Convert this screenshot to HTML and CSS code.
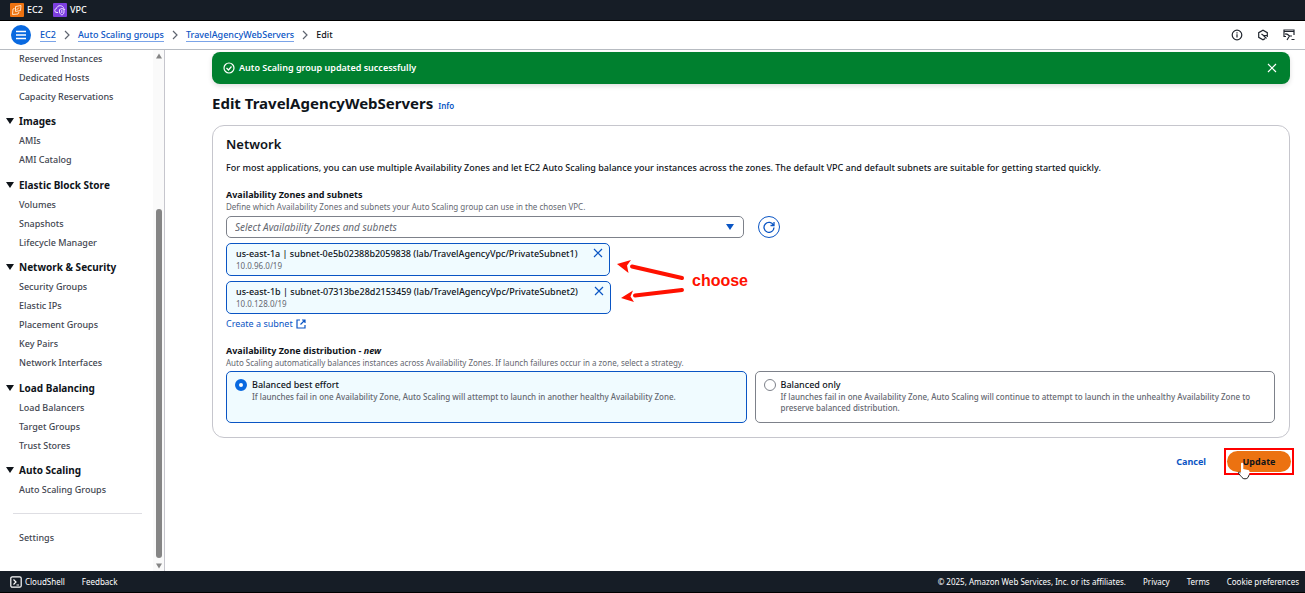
FILE: index.html
```html
<!DOCTYPE html>
<html lang="en">
<head>
<meta charset="utf-8">
<title>Edit TravelAgencyWebServers | EC2</title>
<link rel="stylesheet" href="styles.css">
</head>
<body>
<div class="app">
  <header class="favorites">
    <a class="favorite" href="#">
      <svg class="service-icon" viewBox="0 0 14 14" aria-hidden="true"><rect width="14" height="14" rx="1" fill="#ed7211"/><g fill="none" stroke="#ffe3c4" stroke-width="1" stroke-linejoin="round"><path d="M5.500 3.500 11 2.500 10.500 7.500 5.500 8.500z"/><path d="M4.500 5.500 3 6 2.500 11.500 8 11 9 9M6.500 7 9 4.500"/></g></svg>
      EC2</a>
    <a class="favorite" href="#">
      <svg class="service-icon" viewBox="0 0 14 14" aria-hidden="true"><rect width="14" height="14" rx="1" fill="#7d3fe0"/><g fill="none" stroke="#eadcff" stroke-width="1"><path d="M5 9.500H4a2 2 0 0 1-.5-4C4 3.500 5.500 2.500 7.500 2.700 9.500 3 10.500 4 10.800 5.500L12 7"/><path d="M6.500 6.500 9 5.500l2 1v2.500c0 1.500-1 2.500-2 3-1-.5-2.500-1.500-2.500-3zM8.800 7v3"/></g></svg>
      VPC</a>
  </header>

  <div class="navbar">
    <button class="menu-button" aria-label="Toggle navigation"><svg viewBox="0 0 20 20"><path d="M5 6.500h10M5 10h10M5 13.500h10" stroke="#fff" stroke-width="1.500"/></svg></button>
    <nav class="breadcrumbs" aria-label="Breadcrumbs">
      <a href="#">EC2</a>
      <svg class="chevron" viewBox="0 0 6 10"><path d="m1 1 4 4-4 4"/></svg>
      <a href="#">Auto Scaling groups</a>
      <svg class="chevron" viewBox="0 0 6 10"><path d="m1 1 4 4-4 4"/></svg>
      <a href="#">TravelAgencyWebServers</a>
      <svg class="chevron" viewBox="0 0 6 10"><path d="m1 1 4 4-4 4"/></svg>
      <span>Edit</span>
    </nav>
    <div class="tools">
      <button class="icon-button" aria-label="Info"><svg viewBox="0 0 12 12"><circle cx="6" cy="6" r="4.800"/><path d="M6 5.300v3.200M6 3.300v1.200"/></svg></button>
      <button class="icon-button" aria-label="Diagnose"><svg viewBox="0 0 12 12"><path d="M10.300 8V3.700L6 1.300 1.700 3.700v4.600L6 10.700l2-1.100M4.500 5l2 1.500h3.800M6.500 6.500l3 3"/></svg></button>
      <button class="icon-button" aria-label="CloudShell"><svg viewBox="0 0 12 12"><path d="M3 7.500H1V1h10v5M1 2.500h10M4 5l2.500 2L4 11M6.500 7H9M8.500 10.500h3M3 4v2"/></svg></button>
    </div>
  </div>

  <div class="workspace">
    <aside class="sidebar">
      <nav class="side-nav" aria-label="EC2">
        <ul class="links">
          <li><a href="#">Reserved Instances</a></li>
          <li><a href="#">Dedicated Hosts</a></li>
          <li><a href="#">Capacity Reservations</a></li>
        </ul>
        <section class="group">
          <h2>Images</h2>
          <ul class="links">
            <li><a href="#">AMIs</a></li>
            <li><a href="#">AMI Catalog</a></li>
          </ul>
        </section>
        <section class="group">
          <h2>Elastic Block Store</h2>
          <ul class="links">
            <li><a href="#">Volumes</a></li>
            <li><a href="#">Snapshots</a></li>
            <li><a href="#">Lifecycle Manager</a></li>
          </ul>
        </section>
        <section class="group">
          <h2>Network &amp; Security</h2>
          <ul class="links">
            <li><a href="#">Security Groups</a></li>
            <li><a href="#">Elastic IPs</a></li>
            <li><a href="#">Placement Groups</a></li>
            <li><a href="#">Key Pairs</a></li>
            <li><a href="#">Network Interfaces</a></li>
          </ul>
        </section>
        <section class="group">
          <h2>Load Balancing</h2>
          <ul class="links">
            <li><a href="#">Load Balancers</a></li>
            <li><a href="#">Target Groups</a></li>
            <li><a href="#">Trust Stores</a></li>
          </ul>
        </section>
        <section class="group">
          <h2>Auto Scaling</h2>
          <ul class="links">
            <li><a href="#">Auto Scaling Groups</a></li>
          </ul>
        </section>
        <hr class="divider">
        <ul class="links">
          <li><a href="#">Settings</a></li>
        </ul>
      </nav>
      <div class="scrollbar" aria-hidden="true">
        <svg viewBox="0 0 8 6"><path d="M1 5.500 4 .5l3 5z"/></svg>
        <div class="track"><div class="thumb"></div></div>
        <svg viewBox="0 0 8 6"><path d="M1 .5 4 5.500l3-5z"/></svg>
      </div>
    </aside>

    <main class="content">
      <div class="flash" role="status">
        <svg class="flash-icon" viewBox="0 0 12 12"><circle cx="6" cy="6" r="5"/><path d="m3.500 6 2 2 3-3.500"/></svg>
        <span>Auto Scaling group updated successfully</span>
        <button class="flash-close" aria-label="Dismiss"><svg viewBox="0 0 10 10"><path d="m1 1 8 8M9 1 1 9"/></svg></button>
      </div>

      <div class="page-title">
        <h1>Edit TravelAgencyWebServers</h1>
        <a href="#">Info</a>
      </div>

      <form class="edit-form">
        <section class="card">
          <h2 class="card-title">Network</h2>
          <p class="lead">For most applications, you can use multiple Availability Zones and let EC2 Auto Scaling balance your instances across the zones. The default VPC and default subnets are suitable for getting started quickly.</p>

          <div class="field">
            <label class="label" for="subnets">Availability Zones and subnets</label>
            <p class="hint">Define which Availability Zones and subnets your Auto Scaling group can use in the chosen VPC.</p>
            <div class="select-row">
              <div class="select-wrap">
                <select id="subnets" class="select"><option>Select Availability Zones and subnets</option></select>
                <svg class="caret" viewBox="0 0 8 6"><path d="M0 0h8L4 6z"/></svg>
              </div>
              <button type="button" class="refresh" aria-label="Refresh"><svg viewBox="0 0 12 12"><path d="M10.500 4.200A5 5 0 1 0 11 6.500M11 1v3.500H7.500"/></svg></button>
            </div>
            <ul class="tokens">
              <li class="token">
                <div><div class="token-name">us-east-1a | subnet-0e5b02388b2059838 (lab/TravelAgencyVpc/PrivateSubnet1)</div><div class="token-cidr">10.0.96.0/19</div></div>
                <button type="button" class="token-remove" aria-label="Remove us-east-1a"><svg viewBox="0 0 10 10"><path d="m1 1 8 8M9 1 1 9"/></svg></button>
              </li>
              <li class="token">
                <div><div class="token-name">us-east-1b | subnet-07313be28d2153459 (lab/TravelAgencyVpc/PrivateSubnet2)</div><div class="token-cidr">10.0.128.0/19</div></div>
                <button type="button" class="token-remove" aria-label="Remove us-east-1b"><svg viewBox="0 0 10 10"><path d="m1 1 8 8M9 1 1 9"/></svg></button>
              </li>
            </ul>
            <a class="create-link" href="#">Create a subnet <svg viewBox="0 0 10 10"><path d="M4 1H1v8h8V6M6 1h3v3M9 1 4.500 5.500"/></svg></a>
          </div>

          <fieldset class="field distribution">
            <legend class="label">Availability Zone distribution - <em>new</em></legend>
            <p class="hint">Auto Scaling automatically balances instances across Availability Zones. If launch failures occur in a zone, select a strategy.</p>
            <div class="tiles">
              <label class="tile">
                <input type="radio" name="distribution" checked>
                <span><span class="tile-title">Balanced best effort</span><span class="tile-text">If launches fail in one Availability Zone, Auto Scaling will attempt to launch in another healthy Availability Zone.</span></span>
              </label>
              <label class="tile">
                <input type="radio" name="distribution">
                <span><span class="tile-title">Balanced only</span><span class="tile-text">If launches fail in one Availability Zone, Auto Scaling will continue to attempt to launch in the unhealthy Availability Zone to preserve balanced distribution.</span></span>
              </label>
            </div>
          </fieldset>
        </section>

        <div class="actions">
          <button type="button" class="cancel">Cancel</button>
          <div class="highlight">
            <button type="button" class="update">Update</button>
            <svg class="cursor" viewBox="0 0 14 18" aria-hidden="true"><path d="M4 1.800C4 .5 6.300.5 6.300 1.800V7l4.700 1c1.300.3 1.700 1 1.500 2.300L12 13.500c-.3 1.500-1 2.500-1 3H6c-1-1.800-2.500-3-4-5C1 10.200 2.200 9.300 3.200 10L4 10.800z" fill="#fff"/><path d="M3.500 10.800C2 9.300.8 10.300 1.800 11.800 3.300 13.800 4.500 14.500 5 15.500c1 1.800 5 1.800 6 0l1.300-3" fill="none" stroke="#222"/></svg>
          </div>
        </div>
      </form>

      <div class="annotation">
        <svg class="arrows" viewBox="0 0 68 42" aria-hidden="true"><path d="m65 18-50-11.500M65 30l-47 5.500" stroke="#f10" stroke-width="4" stroke-linecap="round"/><path d="M0 4 14 0 10 5.500 11.500 13zM4 38 16 30.500 13.500 36.500 17 42z" fill="#f10"/></svg>
        <span>choose</span>
      </div>
    </main>
  </div>

  <footer class="footer">
    <button class="footer-button"><svg viewBox="0 0 12 12"><rect x=".8" y=".8" width="10.400" height="10.400" rx="1.500"/><path d="m3.500 3.500 2.500 2.500-2.500 2.500M6.500 9H9"/></svg>CloudShell</button>
    <button class="footer-button">Feedback</button>
    <span class="copyright">© 2025, Amazon Web Services, Inc. or its affiliates.</span>
    <a href="#">Privacy</a>
    <a href="#">Terms</a>
    <a href="#">Cookie preferences</a>
  </footer>
</div>
</body>
</html>
```
FILE: styles.css
```css
:root {
  --blue: #0a55c4;
  --ink: #0f141a;
  --muted: #656871;
  --navy: #161d26;
}
* { box-sizing: border-box; }
body {
  margin: 0;
  color: var(--ink);
  background: #fff;
  font: 10px/12px "Noto Sans", "Open Sans", sans-serif;
}
h1, h2, p, ul, fieldset { margin: 0; padding: 0; }
ul { list-style: none; }
a { color: var(--blue); text-decoration: none; }
button { border: 0; padding: 0; background: none; font: inherit; color: inherit; cursor: pointer; }
svg { display: block; fill: none; }
.app { display: flex; flex-direction: column; height: 100vh; }

.favorites {
  display: flex;
  align-items: center;
  gap: 10px;
  height: 21px;
  flex: none;
  padding: 0 10px;
  background: var(--navy);
  border-bottom: 1px solid #000;
}
.favorite { display: flex; align-items: center; gap: 3px; color: #fff; font-size: 9px; font-weight: 500; }
.service-icon { width: 14px; height: 14px; }

.navbar {
  display: flex;
  align-items: center;
  flex: none;
  height: 29px;
  padding: 0 10px 0 11px;
  border-bottom: 1px solid #b8bcc2;
}
.menu-button { width: 20px; height: 20px; border-radius: 50%; background: #0969e0; }
.breadcrumbs { display: flex; align-items: center; gap: 8px; margin-left: 9px; font-size: 9px; font-weight: 500; }
.breadcrumbs a { border-bottom: 1px solid #7ba4e8; }
.chevron { width: 6px; height: 10px; stroke: #5f6570; stroke-width: 1.2; }
.tools { display: flex; gap: 14px; margin-left: auto; }
.icon-button svg { width: 12px; height: 12px; stroke: #20252e; stroke-width: 1.2; }

.workspace { display: flex; flex: 1; min-height: 0; }
.sidebar { display: flex; flex: none; width: 165px; border-right: 1px solid #c6c6cd; }
.side-nav { flex: 1; overflow: hidden; padding-left: 19px; }
.side-nav > .links:first-child { margin-top: -1px; }
.links li { line-height: 19px; }
.links a { color: #424650; font-size: 9px; font-weight: 500; }
.group { margin-top: 6px; }
.group:nth-of-type(even) { margin-top: 7px; }
.group h2 { position: relative; font-size: 10px; line-height: 19px; font-weight: 700; }
.group h2::before {
  content: "";
  position: absolute;
  left: -13px;
  top: 6px;
  border: 4px solid transparent;
  border-top: 6px solid var(--ink);
  border-bottom: 0;
}
.divider { margin: 14px 11px 14px -6px; border: 0; border-top: 1px solid #dedee3; }
.scrollbar { display: flex; flex-direction: column; align-items: center; width: 11px; padding: 3px 0 2px; background: #fafafa; }
.scrollbar svg { width: 8px; height: 6px; fill: #858585; }
.track { display: flex; flex-direction: column; justify-content: flex-end; flex: 1; padding-bottom: 5px; }
.thumb { width: 6px; height: 70%; border-radius: 3px; background: #858585; }

.content { position: relative; flex: 1; min-width: 0; padding: 2px 15px 0 47px; }
.flash {
  display: flex;
  align-items: center;
  gap: 4px;
  padding: 10px 13px 10px 11px;
  border-radius: 8px;
  background: #00802f;
  box-shadow: 0 2px 5px #0002;
  color: #fff;
  font-size: 9px;
  font-weight: 600;
}
.flash-icon { width: 12px; height: 12px; stroke: #fff; stroke-width: 1.2; }
.flash-close { margin-left: auto; }
.flash-close svg { width: 10px; height: 10px; stroke: #fff; stroke-width: 1.2; }
.page-title { display: flex; align-items: baseline; gap: 5px; padding: 9px 0 12px; }
.page-title h1 { font-size: 15px; line-height: 20px; font-weight: 700; }
.page-title a { font-size: 8px; font-weight: 600; }

.card { padding: 8px 14px 14px 13px; border: 1px solid #c6c6cd; border-radius: 12px; }
.card-title { font-size: 13px; line-height: 20px; font-weight: 600; }
.lead { margin-top: 7px; font-size: 9px; line-height: 14px; font-weight: 500; }
.field { margin-top: 14px; }
.label { display: block; padding: 0; font-size: 9px; line-height: 12px; font-weight: 700; }
.hint { font-size: 8px; line-height: 12px; color: var(--muted); }
.select-row { display: flex; align-items: center; gap: 14px; margin-top: 3px; }
.select-wrap { position: relative; width: calc(50% - 7px); }
.select {
  display: block;
  width: 100%;
  height: 22px;
  padding: 0 8px;
  appearance: none;
  border: 1px solid #7d818a;
  border-radius: 5px;
  background: #fff;
  color: var(--muted);
  font: italic 10px/20px "Noto Sans", "Open Sans", sans-serif;
}
.caret { position: absolute; right: 10px; top: 8px; width: 8px; height: 6px; fill: var(--blue); pointer-events: none; }
.refresh { display: grid; place-items: center; width: 22px; height: 22px; border: 1px solid var(--blue); border-radius: 50%; }
.refresh svg { width: 12px; height: 12px; stroke: var(--blue); stroke-width: 1.3; }
.tokens { display: flex; flex-direction: column; align-items: flex-start; gap: 5px; margin-top: 5px; }
.token {
  display: flex;
  align-items: flex-start;
  gap: 16px;
  padding: 3px 6px 4px 9px;
  border: 1px solid var(--blue);
  border-radius: 5px;
  background: #f0fbff;
}
.token-name { font-size: 9px; line-height: 13px; font-weight: 500; }
.token-cidr { font-size: 8px; line-height: 11px; color: var(--muted); }
.token-remove { padding: 1px 0; }
.token-remove svg { width: 10px; height: 10px; stroke: var(--blue); stroke-width: 1.2; }
.create-link { display: inline-flex; align-items: center; gap: 3px; margin-top: 4px; font-size: 9px; }
.create-link svg { width: 10px; height: 10px; stroke: var(--blue); stroke-width: 1.2; }
.distribution { margin-top: 15px; border: 0; min-width: 0; }
.tiles { display: grid; grid-template-columns: 1fr 1fr; gap: 8px; margin-top: 2px; }
.tile {
  display: flex;
  align-items: flex-start;
  gap: 5px;
  min-height: 52px;
  padding: 7px 8px;
  border: 1px solid #7d818a;
  border-radius: 5px;
}
.tile:has(:checked) { border-color: var(--blue); background: #f0fbff; }
.tile input { flex: none; width: 12px; height: 12px; margin: 0; appearance: none; border: 1px solid #7d818a; border-radius: 50%; background: #fff; }
.tile input:checked { border: 4px solid #0969e0; }
.tile-title { display: block; font-size: 9px; line-height: 12px; font-weight: 500; }
.tile-text { display: block; font-size: 8px; line-height: 11px; font-weight: 500; color: var(--muted); }

.actions { display: flex; align-items: center; justify-content: flex-end; gap: 18px; margin: 10px -4px 0 0; }
.cancel { color: var(--blue); font-size: 9px; font-weight: 700; }
.highlight { position: relative; padding: 1px; border: 2px solid #f00; }
.update { display: block; width: 64px; height: 21px; border-radius: 11px; background: #ec7211; color: var(--ink); font-size: 9px; font-weight: 700; }
.cursor { position: absolute; left: 11px; top: 12px; width: 14px; height: 18px; }

.annotation { position: absolute; left: 452px; top: 210px; display: flex; align-items: center; gap: 7px; color: #f10; font: 700 16px/20px "Liberation Sans", sans-serif; }
.arrows { width: 68px; height: 42px; }

.footer {
  display: flex;
  align-items: center;
  gap: 17px;
  flex: none;
  height: 22px;
  padding: 0 6px 0 10px;
  background: var(--navy);
  border-bottom: 1px solid #000;
  color: #fff;
  font-size: 8px;
}
.footer a { color: #fff; }
.footer-button { display: flex; align-items: center; gap: 3px; }
.footer-button svg { width: 12px; height: 12px; stroke: #fff; stroke-width: 1.2; }
.copyright { margin-left: auto; }
```
